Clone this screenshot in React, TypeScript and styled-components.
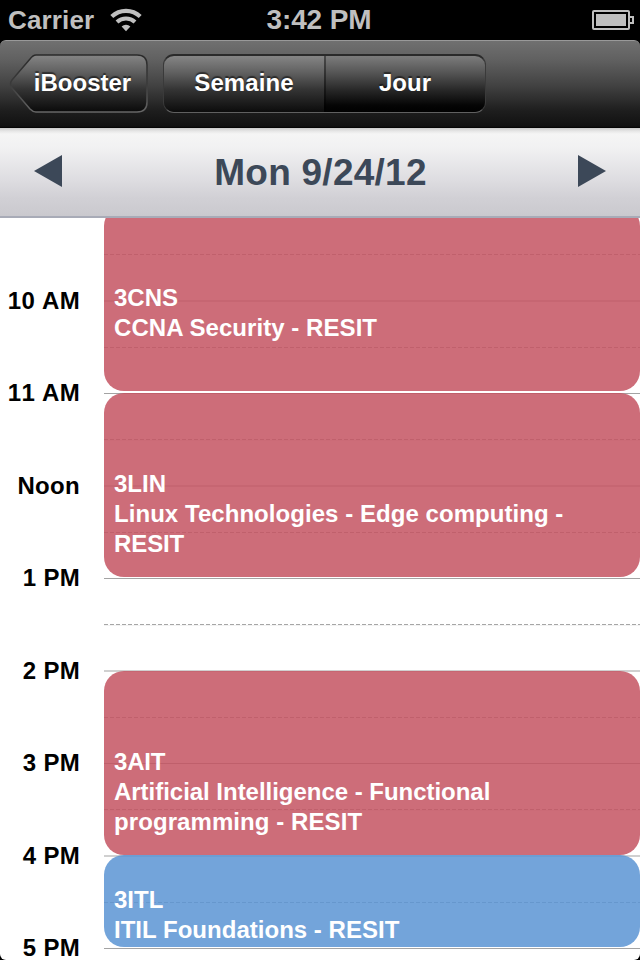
import React from "react";
import styled, { createGlobalStyle, css } from "styled-components";

const GlobalStyle = createGlobalStyle`
  * { box-sizing: border-box; }
  body { margin: 0; background: #000; font-family: "Liberation Sans", Arial, sans-serif; font-weight: 700; }
`;

const Screen = styled.main`
  width: 640px;
  height: 960px;
  display: flex;
  flex-direction: column;
  overflow: hidden;
  background: #000;
`;

const StatusBar = styled.header`
  height: 40px;
  flex: none;
  display: grid;
  grid-template-columns: 1fr auto 1fr;
  align-items: center;
  padding: 0 6px 0 8px;
  color: #bfbfbf;
`;

const StatusGroup = styled.div<{ $end?: boolean }>`
  display: flex;
  align-items: center;
  gap: 16px;
  justify-content: ${(p) => (p.$end ? "flex-end" : "flex-start")};
`;

const Label = styled.span<{ $size: number; $spacing?: number }>`
  font-size: ${(p) => p.$size}px;
  line-height: 1;
  white-space: nowrap;
  letter-spacing: ${(p) => p.$spacing ?? 0}px;
`;

const Clock = styled(Label)`
  margin-right: 4px;
`;

const NavBar = styled.nav`
  height: 88px;
  flex: none;
  display: flex;
  align-items: flex-start;
  gap: 14px;
  padding: 13px 8px 0 9px;
  border-top: 1px solid #999;
  border-radius: 6px 6px 0 0;
  background: linear-gradient(#707070, #606060 22%, #434343 50%, #1e1e1e 80%, #111 98%, #000);
  color: #fff;
  text-shadow: 0 -2px 1px rgba(0, 0, 0, 0.5);
`;

const BackButton = styled.button`
  position: relative;
  width: 140px;
  height: 60px;
  padding: 0 0 3px 7px;
  border: 0;
  background: none;
  color: inherit;
  font: inherit;
  text-shadow: inherit;
`;

const BackShape = styled.svg`
  position: absolute;
  inset: 0;
`;

const BackText = styled(Label)`
  position: relative;
`;

const Segments = styled.div`
  display: flex;
  width: 323px;
  height: 59px;
  border-radius: 11px;
  border: 1px solid;
  border-color: #2a2a2a #3a3a3a #606060;
  border-top-width: 2px;
  background: #222;
  overflow: hidden;
`;

const Segment = styled.button<{ $active?: boolean }>`
  flex: ${(p) => (p.$active ? "1" : "0 0 160px")};
  padding: ${(p) => (p.$active ? "0 0 3px 1px" : "0 0 3px")};
  border: 0;
  color: inherit;
  font: inherit;
  text-shadow: inherit;
  background: ${(p) =>
    p.$active
      ? "linear-gradient(#7c7c7c, #555 30%, #262626 62%, #050505 88%, #000)"
      : "linear-gradient(#858585, #606060 30%, #343434 60%, #0c0c0c)"};
  ${(p) => p.$active && css`box-shadow: inset 2px 0 rgba(0, 0, 0, 0.4);`}
`;

const DateBar = styled.section`
  height: 90px;
  flex: none;
  display: flex;
  align-items: center;
  justify-content: space-between;
  padding: 0 34px 2px;
  border-bottom: 2px solid #a8abb7;
  background: linear-gradient(#c9c9c9, #e6e6e6 3px, #f5f5f5 6px, #f1f1f2 20px, #dddce0 53px, #d1d0d5 70px, #cac9ce);
  color: #3c4858;
`;

const DateTitle = styled(Label)`
  padding: 2px 0 0 1px;
`;

const Arrow = styled.svg`
  display: block;
`;

const Calendar = styled.section`
  position: relative;
  flex: 1;
  min-height: 0;
  overflow: hidden;
  background: #fff;
  padding-top: 36px;
  border-radius: 0 0 6px 6px;
`;

const HourBlock = styled.div<{ $height: number }>`
  display: grid;
  grid-template-columns: 80px 1fr;
  column-gap: 24px;
  height: ${(p) => p.$height}px;
`;

const HourLabel = styled.time<{ $soft?: boolean }>`
  font-size: 24px;
  line-height: 24px;
  height: 24px;
  margin-top: ${(p) => (p.$soft ? -11 : -12)}px;
  text-align: right;
  white-space: nowrap;
  font-kerning: none;
  letter-spacing: 0.3px;
`;

const dashes = css`
  content: "";
  display: block;
  height: 1px;
  background: repeating-linear-gradient(90deg, #a6a6a6 0 4px, #fff 4px 6px);
`;

const HourLines = styled.div<{ $soft?: boolean; $half: number }>`
  border-top: ${(p) => (p.$soft ? "2px solid #d0d0d0" : "1px solid #a3a3a3")};
  &::after {
    ${dashes}
    margin-top: ${(p) => p.$half - (p.$soft ? 2 : 1)}px;
    ${(p) => !p.$soft && css`box-shadow: 0 1px rgba(0, 0, 0, 0.05);`}
  }
`;

const HalfLead = styled.div`
  height: 46px;
  margin-left: 104px;
  &::before {
    ${dashes}
  }
`;

/* Overlays the hour grid at the time span of each course. */
const Event = styled.article<{ $top: number; $height: number; $blue?: boolean }>`
  position: absolute;
  top: ${(p) => p.$top}px;
  left: 104px;
  right: 0;
  height: ${(p) => p.$height}px;
  display: flex;
  flex-direction: column;
  justify-content: flex-end;
  padding: 0 10px;
  border-radius: 20px;
  background: ${(p) => (p.$blue ? "rgba(90,148,212,.85)" : "rgba(196,84,97,.85)")};
  color: #fff;
`;

const EventText = styled.p<{ $bottom: number }>`
  margin: 0 0 ${(p) => p.$bottom}px;
  font-size: 24px;
  line-height: 30px;
`;

const EventLine = styled.span<{ $spacing: number }>`
  display: block;
  white-space: nowrap;
  font-variant-ligatures: none;
  letter-spacing: ${(p) => p.$spacing}px;
`;

const hours = [
  { label: "10 AM", height: 93, soft: true, half: 47 },
  { label: "11 AM", height: 92, soft: false, half: 46 },
  { label: "Noon", height: 93, soft: true, half: 47 },
  { label: "1 PM", height: 92, soft: false, half: 46 },
  { label: "2 PM", height: 93, soft: true, half: 47 },
  { label: "3 PM", height: 92, soft: false, half: 46 },
  { label: "4 PM", height: 93, soft: true, half: 47 },
  { label: "5 PM", height: 92, soft: false, half: 46 },
];

type Line = [string, number];
const events: { top: number; height: number; bottom: number; blue?: boolean; lines: Line[] }[] = [
  { top: -12, height: 185, bottom: 48, lines: [["3CNS", 0], ["CCNA Security - RESIT", 0.06]] },
  { top: 175, height: 184, bottom: 18, lines: [["3LIN", 0], ["Linux Technologies - Edge computing -", 0.05], ["RESIT", -0.1]] },
  { top: 453, height: 184, bottom: 18, lines: [["3AIT", -0.2], ["Artificial Intelligence - Functional", -0.03], ["programming - RESIT", 0.08]] },
  { top: 637, height: 92, bottom: 2, blue: true, lines: [["3ITL", 0], ["ITIL Foundations - RESIT", 0.02]] },
];

export default function App() {
  return (
    <>
      <GlobalStyle />
      <Screen>
        <StatusBar>
          <StatusGroup>
            <Label $size={26} $spacing={0.15}>Carrier</Label>
            <svg width="32" height="24" viewBox="0 0 32 24" fill="none" stroke="#bfbfbf">
              <path d="M1.8 8.5a20.5 20.5 0 0 1 28.4 0" strokeWidth="4.2" />
              <path d="M7 14a13 13 0 0 1 18 0" strokeWidth="4" />
              <path d="M16 23.2l-4.4-4.6a6.2 6.2 0 0 1 8.8 0z" fill="#bfbfbf" stroke="none" />
            </svg>
          </StatusGroup>
          <Clock $size={28} $spacing={-0.1}>3:42 PM</Clock>
          <StatusGroup $end>
            <svg width="42" height="20" viewBox="0 0 42 20" fill="none" stroke="#bfbfbf" strokeWidth="2">
              <rect x="1" y="1" width="36" height="18" rx="1" />
              <path d="M38 7h3v6h-3" />
              <path d="M4 4h30v12H4z" fill="#bfbfbf" stroke="none" />
            </svg>
          </StatusGroup>
        </StatusBar>
        <NavBar>
          <BackButton>
            <BackShape width="140" height="60" viewBox="0 0 140 60">
              <defs>
                <linearGradient id="fill" x1="0" y1="0" x2="0" y2="1">
                  <stop offset="0" stopColor="#858585" />
                  <stop offset=".3" stopColor="#606060" />
                  <stop offset=".6" stopColor="#343434" />
                  <stop offset="1" stopColor="#0a0a0a" />
                </linearGradient>
                <linearGradient id="edge" x1="0" y1="0" x2="0" y2="1">
                  <stop offset="0" stopColor="#2a2a2a" />
                  <stop offset=".5" stopColor="#3a3a3a" />
                  <stop offset="1" stopColor="#666" />
                </linearGradient>
              </defs>
              <path
                d="M27 1H128Q138 1 138 11V48Q138 58 128 58H27Q24 58 21 55L3 34Q0 30 3 26L21 5Q24 1 27 1Z"
                fill="url(#fill)"
                stroke="url(#edge)"
                strokeWidth="1.5"
              />
            </BackShape>
            <BackText $size={24}>iBooster</BackText>
          </BackButton>
          <Segments>
            <Segment><Label $size={24} $spacing={0.1}>Semaine</Label></Segment>
            <Segment $active><Label $size={24}>Jour</Label></Segment>
          </Segments>
        </NavBar>
        <DateBar>
          <Arrow width="28" height="32" viewBox="0 0 28 32"><path d="M28 0v32L0 16z" fill="#3c4858" /></Arrow>
          <DateTitle $size={37} $spacing={0.25}>Mon 9/24/12</DateTitle>
          <Arrow width="28" height="32" viewBox="0 0 28 32"><path d="M0 0v32l28-16z" fill="#3c4858" /></Arrow>
        </DateBar>
        <Calendar>
          <HalfLead />
          {hours.map((h) => (
            <HourBlock key={h.label} $height={h.height}>
              <HourLabel $soft={h.soft}>{h.label}</HourLabel>
              <HourLines $soft={h.soft} $half={h.half} />
            </HourBlock>
          ))}
          {events.map((e) => (
            <Event key={e.top} $top={e.top} $height={e.height} $blue={e.blue}>
              <EventText $bottom={e.bottom}>
                {e.lines.map(([text, spacing]) => (
                  <EventLine key={text} $spacing={spacing}>{text}</EventLine>
                ))}
              </EventText>
            </Event>
          ))}
        </Calendar>
      </Screen>
    </>
  );
}
